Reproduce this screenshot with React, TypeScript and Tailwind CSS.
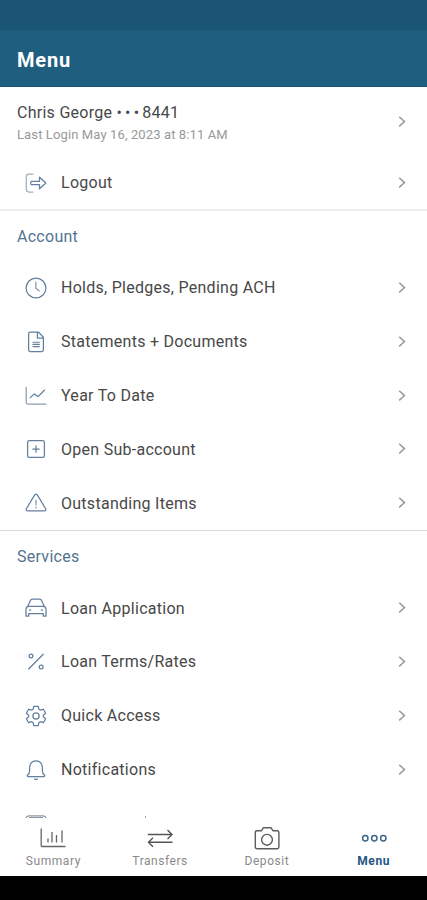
import React from 'react';

type IconName =
  | 'logout' | 'clock' | 'document' | 'trend' | 'plus' | 'warning'
  | 'car' | 'percent' | 'gear' | 'bell' | 'card';

interface MenuItem {
  icon: IconName;
  label: string;
}

const ACCOUNT_ITEMS: MenuItem[] = [
  { icon: 'clock', label: 'Holds, Pledges, Pending ACH' },
  { icon: 'document', label: 'Statements + Documents' },
  { icon: 'trend', label: 'Year To Date' },
  { icon: 'plus', label: 'Open Sub-account' },
  { icon: 'warning', label: 'Outstanding Items' },
];

const SERVICE_ITEMS: MenuItem[] = [
  { icon: 'car', label: 'Loan Application' },
  { icon: 'percent', label: 'Loan Terms/Rates' },
  { icon: 'gear', label: 'Quick Access' },
  { icon: 'bell', label: 'Notifications' },
];

// All drawn on a 22x22 grid
const ICONS: Record<IconName, React.ReactNode> = {
  logout: (
    <>
      <path stroke="#a3adb8" d="M8 2H4Q1.3 2 1.3 4.7v12.6Q1.3 20 4 20h4" />
      <path d="M6.2 9.3h8.3V5.2l6.3 5.8-6.3 5.8v-4.1H6.2q-1.3-1.7 0-3.4z" />
    </>
  ),
  clock: (
    <>
      <circle cx="11" cy="11" r="9.9" />
      <path stroke="#8499b1" d="M10.8 5v6.3l3.4 2.5" />
    </>
  ),
  document: (
    <>
      <path d="M5.3 1.2h8.3l4.8 5v12.6q0 1.7-1.7 1.7H5.3q-1.7 0-1.7-1.7V2.9q0-1.7 1.7-1.7z" />
      <path d="M12.4 1.5v5.7h5.7" />
      <path d="M8 11.2h6.4M8 13.4h6.4M8 15.6h6.4" strokeWidth="1.1" />
    </>
  ),
  trend: (
    <>
      <path stroke="#8d9caf" d="M1.2 2.3v15.3q0 1.5 1.5 1.5h18.2" />
      <path d="M5.3 12.6l4-3.7 3.7 2.7 6.4-6.4" />
    </>
  ),
  plus: (
    <>
      <rect x="2.6" y="2.6" width="16.8" height="16.8" rx="1.6" />
      <path d="M7.8 11h6.4M11 7.8v6.4" />
    </>
  ),
  warning: (
    <>
      <path d="M9.7 2.9q1.3-1.8 2.6 0l8.3 13.8q.8 2.2-1.5 2.2H2.9q-2.3 0-1.5-2.2z" />
      <path d="M11 8v5M11 15v1.2" strokeWidth="1" />
    </>
  ),
  car: (
    <>
      <path d="M2.7 9.5l2.7-6Q6 2.1 7.2 2.1h7.6q1.2 0 1.8 1.4l2.7 6" />
      <path d="M4 9.3h14q3 0 3 3v6.9h-2.7v-2.5H3.7v2.5H1v-6.9q0-3 3-3z" />
      <path d="M4.5 13h1.2M16.3 13h1.2" />
    </>
  ),
  percent: (
    <>
      <path d="M3.7 18L18.2 3.2" />
      <circle cx="6" cy="4.9" r="1.9" />
      <circle cx="16.2" cy="16" r="1.9" />
    </>
  ),
  gear: (
    <>
      <path d="M8.7 1.3h4.6l.6 3 1.5.9 3-1 2.2 4-2.3 2v1.5l2.3 2-2.2 4-3-1-1.5.9-.6 3H8.7l-.6-3-1.5-.9-3 1-2.2-4 2.3-2v-1.5l-2.3-2 2.2-4 3 1 1.5-.9z" />
      <circle cx="11" cy="10.9" r="3.1" />
    </>
  ),
  bell: (
    <>
      <path d="M2.3 16.2q2.3-1.5 2.3-4.2V8Q5.6 1.9 11 1.9T17.4 8v4q0 2.7 2.3 4.2.3 1.3-1 1.3H3.3q-1.3 0-1-1.3z" />
      <path d="M9.6 20q1.4 1 2.8 0" />
    </>
  ),
  card: <path stroke="#8d96a3" d="M.8 5.2q.8-2.4 3-2.4h14.4q2.2 0 3 2.4M4.5 4.7h13" />,
};

const RowIcon = ({ name }: { name: IconName }) => (
  <svg
    viewBox="0 0 22 22"
    className="h-[22px] w-[22px] shrink-0"
    fill="none"
    stroke="#637f9f"
    strokeWidth={1.25}
    strokeLinecap="round"
    strokeLinejoin="round"
  >
    {ICONS[name]}
  </svg>
);

const Chevron = () => (
  <svg viewBox="0 0 8 12" className="h-3 w-2 shrink-0" fill="none" stroke="#999" strokeWidth="1.5">
    <path d="M1.2 .8L6.5 5.6l-5.3 4.8" />
  </svg>
);

const Row = ({ icon, label }: MenuItem) => (
  <div className="flex h-[53.9px] shrink-0 items-center pl-[25px] pr-[21px]">
    <RowIcon name={icon} />
    <span className="flex-1 whitespace-nowrap pl-[14px] pt-px text-base leading-5 tracking-[0.27px] text-[#484848]">
      {label}
    </span>
    <Chevron />
  </div>
);

const SectionTitle = ({ children }: { children: React.ReactNode }) => (
  <h2 className="flex h-[49.9px] shrink-0 items-center pl-[17px] pt-[2px] text-base tracking-[0.27px] text-[#557391]">
    {children}
  </h2>
);

const TabBar = () => (
  <nav className="grid h-[58px] shrink-0 grid-cols-4 bg-white text-center text-xs leading-4 tracking-[0.55px] text-[#8a8a8a]">
    <div className="flex flex-col items-center pt-[7px]">
      <svg viewBox="0 0 28 28" className="h-7 w-7" fill="none" stroke="#666" strokeWidth="1.3">
        <path d="M2.2 3.5v17q0 1 1 1h23.3M9 13.5v4M13 7v10.5M17.5 10v7.5M23 5.5v12" />
      </svg>
      <span>Summary</span>
    </div>
    <div className="flex flex-col items-center pt-[7px]">
      <svg viewBox="0 0 28 28" className="h-7 w-7" fill="none" stroke="#555" strokeWidth="1.4">
        <path d="M1.8 9.5h24M21.5 5l4.5 4.5-4.5 4.5M26.5 17.2H2.5M7 12.7l-4.5 4.5L7 21.7" />
      </svg>
      <span>Transfers</span>
    </div>
    <div className="flex flex-col items-center pt-[7px]">
      <svg viewBox="0 0 28 28" className="h-7 w-7" fill="none" stroke="#5c5c5c" strokeWidth="1.4" strokeLinejoin="round">
        <path d="M4 5.7h4.5l2-3h7.4l2 3h4.3q1.7 0 1.7 1.7v14.7q0 1.7-1.7 1.7H4q-1.7 0-1.7-1.7V7.4Q2.3 5.7 4 5.7z" />
        <circle cx="14" cy="14.8" r="5.4" />
      </svg>
      <span>Deposit</span>
    </div>
    <div className="flex flex-col items-center pt-[7px] font-bold text-[#285682]">
      <svg viewBox="0 0 28 28" className="h-7 w-7" fill="none" stroke="#3b668d" strokeWidth="1.5">
        <circle cx="5.3" cy="13.3" r="2.7" />
        <circle cx="14.3" cy="13.3" r="2.7" />
        <circle cx="23.3" cy="13.3" r="2.7" />
      </svg>
      <span>Menu</span>
    </div>
  </nav>
);

const App: React.FC = () => {
  return (
    <div className="flex h-[900px] w-[427px] flex-col overflow-hidden bg-white font-[Roboto,sans-serif]">
      <div className="h-[30px] shrink-0 bg-[#1a5674]" />
      <header className="flex h-[57px] shrink-0 items-center border-b border-[#175174] bg-[#205e80] pl-[17px] pt-[3px]">
        <h1 className="text-xl font-bold tracking-[0.8px] text-white">Menu</h1>
      </header>

      <main className="flex min-h-0 flex-1 flex-col overflow-hidden">
        <div className="flex h-[69px] shrink-0 items-center pl-[17px] pr-[21px]">
          <div className="flex-1">
            <div className="whitespace-nowrap pt-[2px] text-base leading-6 tracking-[0.27px] text-[#484848]">
              Chris George <span className="tracking-[3.2px]">•••</span>8441
            </div>
            <div className="text-[13px] leading-5 tracking-[0.12px] text-[#989898]">
              Last Login May 16, 2023 at 8:11 AM
            </div>
          </div>
          <Chevron />
        </div>
        <Row icon="logout" label="Logout" />
        <div className="-mt-px h-[2px] shrink-0 bg-[#eeeeee]" />

        <SectionTitle>Account</SectionTitle>
        {ACCOUNT_ITEMS.map((item) => (
          <Row key={item.label} {...item} />
        ))}
        <div className="h-px shrink-0 bg-[#d9d9d9]" />

        <SectionTitle>Services</SectionTitle>
        {SERVICE_ITEMS.map((item) => (
          <Row key={item.label} {...item} />
        ))}
        {/* Next row, mostly scrolled under the tab bar */}
        <div className="flex h-[53.9px] shrink-0 items-center pl-[25px]">
          <RowIcon name="card" />
          <div className="mb-[13px] ml-[98px] h-[2px] w-px bg-[#a0a0a0]" />
        </div>
      </main>

      <TabBar />
      <div className="h-6 shrink-0 bg-black" />
    </div>
  );
};

export default App;
